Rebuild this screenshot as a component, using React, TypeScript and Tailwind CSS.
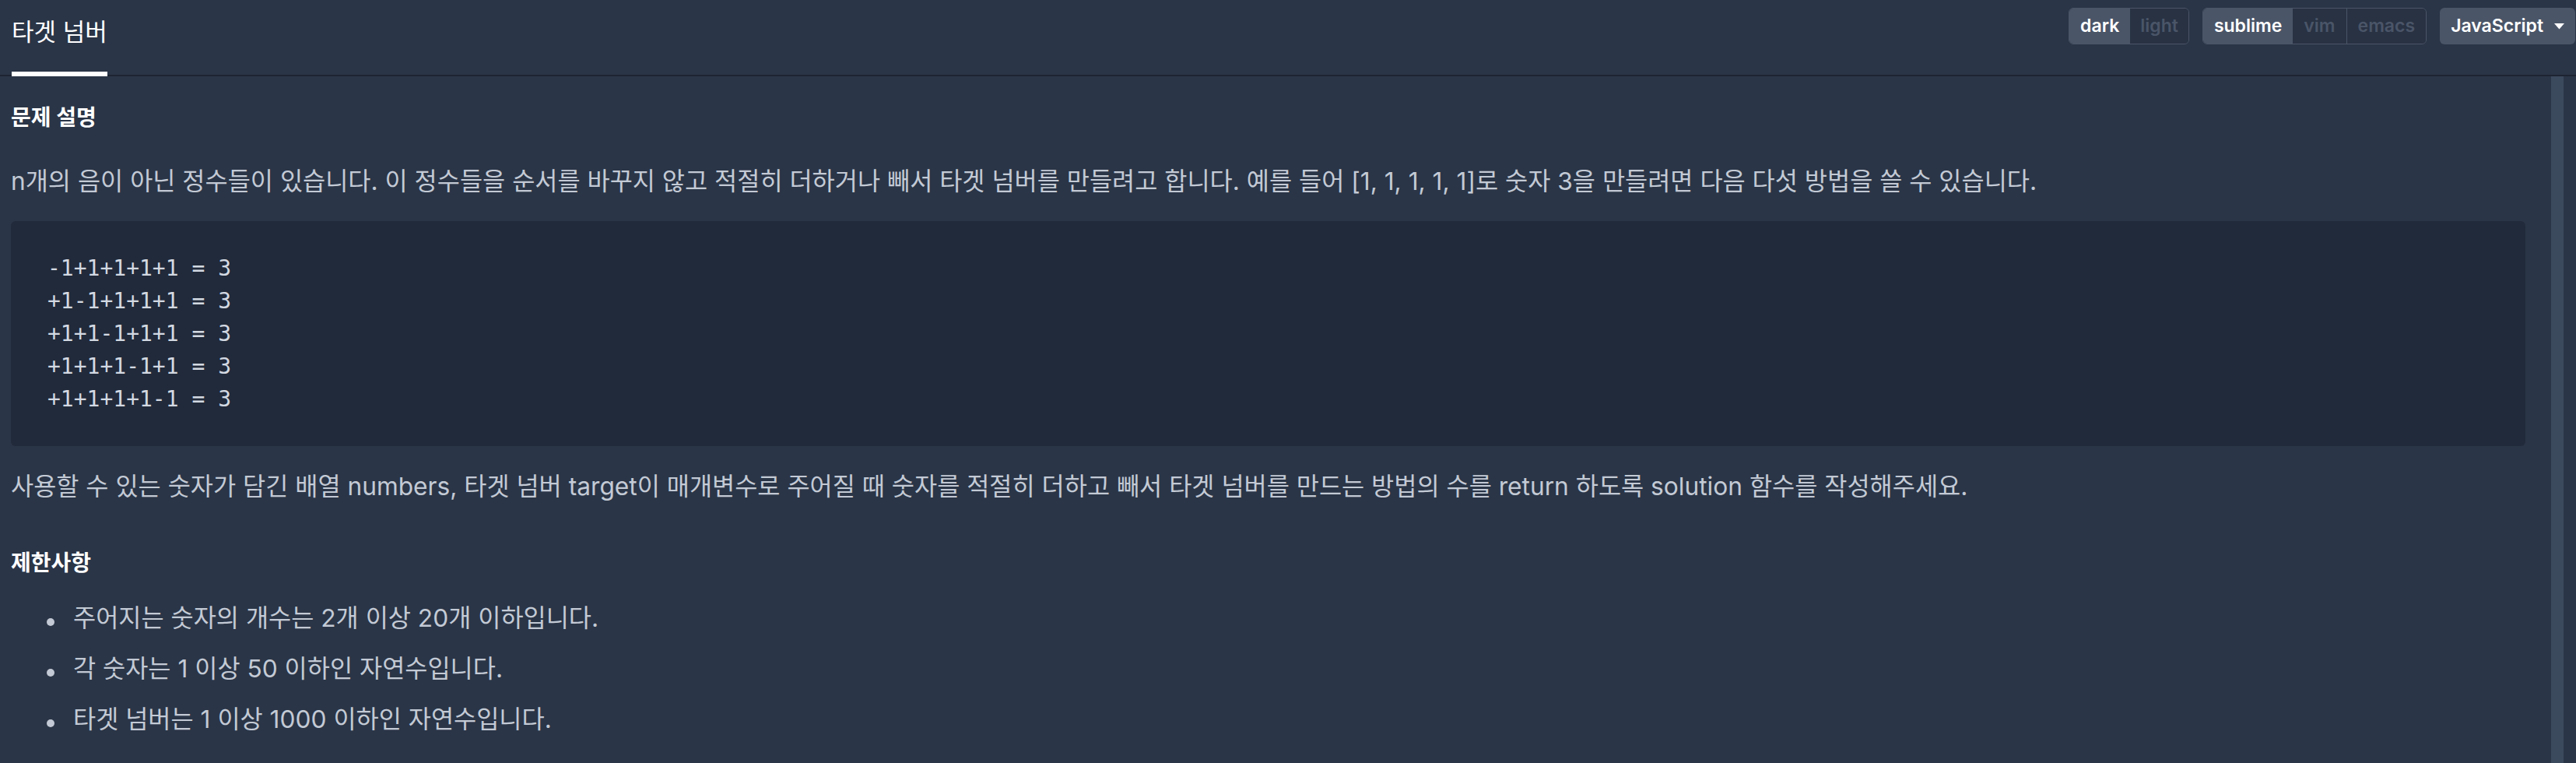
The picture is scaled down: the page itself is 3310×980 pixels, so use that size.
import React from "react";

const FONT = { fontFamily: 'Inter, "Noto Sans CJK KR", "Noto Sans", sans-serif' };
const MONO = { fontFamily: '"DejaVu Sans Mono", "Liberation Mono", monospace' };

function Caret() {
  return (
    <svg width="13" height="8" viewBox="0 0 13 8" className="block">
      <path d="M0 0 L13 0 L6.5 7.5 Z" fill="#ffffff" />
    </svg>
  );
}

export default function App() {
  const codeLines = [
    "-1+1+1+1+1 = 3",
    "+1-1+1+1+1 = 3",
    "+1+1-1+1+1 = 3",
    "+1+1+1-1+1 = 3",
    "+1+1+1+1-1 = 3",
  ];
  const bullets = [
    "주어지는 숫자의 개수는 2개 이상 20개 이하입니다.",
    "각 숫자는 1 이상 50 이하인 자연수입니다.",
    "타겟 넘버는 1 이상 1000 이하인 자연수입니다.",
  ];
  return (
    <div className="w-[3310px] h-[980px] overflow-hidden bg-[#2a3547] flex flex-col" style={FONT}>
      <header className="flex h-[98px] shrink-0 border-b-2 border-[#1d2431] pl-[14px]">
        <div className="flex flex-col -mb-[2px] px-[1px]">
          <div className="flex-1 flex items-center pb-[12px] text-[31px] text-white leading-none">
            타겟 넘버
          </div>
          <div className="h-[6px] bg-white" />
        </div>
        <div className="ml-auto flex items-start pt-[10px] gap-[17px] pr-[1px]">
          <div className="flex h-[47px] rounded-[6px] border border-[#4a5568] overflow-hidden text-[23px] font-semibold">
            <span className="px-[14px] flex items-center bg-[#4a5568] text-white">dark</span>
            <span className="px-[13px] flex items-center bg-[#283243] text-[#4a5568]">light</span>
          </div>
          <div className="flex h-[47px] rounded-[6px] border border-[#4a5568] overflow-hidden text-[23px] font-semibold">
            <span className="px-[14px] flex items-center bg-[#4a5568] text-white">sublime</span>
            <span className="px-[14px] flex items-center bg-[#283243] text-[#4a5568]">vim</span>
            <span className="px-[14px] flex items-center bg-[#283243] text-[#4a5568] border-l border-[#4a5568]">emacs</span>
          </div>
          <div className="flex h-[47px] items-center rounded-[6px] bg-[#4a5568] pl-[14px] pr-[14px] gap-[14px] text-[23px] font-semibold text-white">
            <span>JavaScript</span>
            <Caret />
          </div>
        </div>
      </header>
      <div className="flex flex-1 min-h-0">
        <main className="flex-1 pl-[14px] pr-[33px] pt-[33px] text-[#c3cad5]">
          <h4 className="text-[28px] font-bold text-white leading-[40px]">문제 설명</h4>
          <p className="mt-[38px] text-[31.7px] leading-[48px]">
            n개의 음이 아닌 정수들이 있습니다. 이 정수들을 순서를 바꾸지 않고 적절히 더하거나 빼서 타겟 넘버를 만들려고 합니다. 예를 들어 [1, 1, 1, 1, 1]로 숫자 3을 만들려면 다음 다섯 방법을 쓸 수 있습니다.
          </p>
          <pre
            className="mt-[27px] h-[289px] rounded-[6px] bg-[#212a3a] pl-[47px] pr-[40px] py-[40px] text-[28px] leading-[42px] text-[#d3d9e2]"
            style={MONO}
          >
            {codeLines.join("\n")}
          </pre>
          <p className="mt-[28px] text-[31.7px] leading-[48px]">
            사용할 수 있는 숫자가 담긴 배열 numbers, 타겟 넘버 target이 매개변수로 주어질 때 숫자를 적절히 더하고 빼서 타겟 넘버를 만드는 방법의 수를 return 하도록 solution 함수를 작성해주세요.
          </p>
          <h5 className="mt-[54px] text-[28px] font-bold text-white leading-[40px]">제한사항</h5>
          <ul className="mt-[27px] flex flex-col gap-[17px]">
            {bullets.map((b) => (
              <li key={b} className="flex items-center text-[31.7px] leading-[48px]">
                <span className="ml-[46px] mr-[24px] mt-[10px] w-[10px] h-[10px] rounded-full bg-[#c3cad5] shrink-0" />
                <span>{b}</span>
              </li>
            ))}
          </ul>
        </main>
        <div className="w-[16px] bg-[#3c4a5e]" />
        <div className="w-[16px]" />
      </div>
    </div>
  );
}
